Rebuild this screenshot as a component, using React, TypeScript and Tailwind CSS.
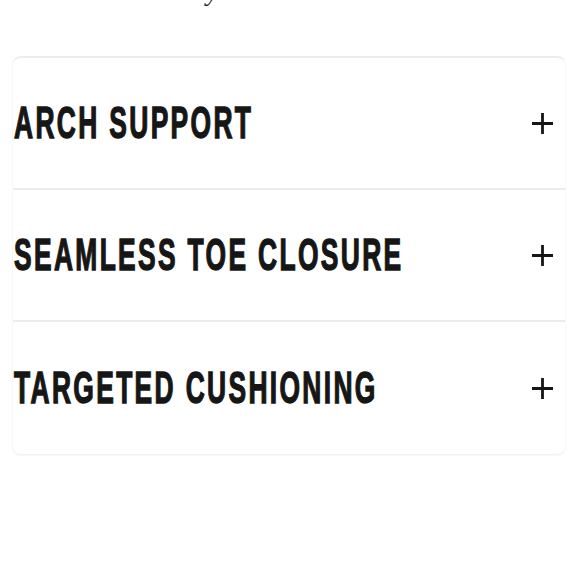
const features = ["ARCH SUPPORT", "SEAMLESS TOE CLOSURE", "TARGETED CUSHIONING"];

function PlusIcon() {
  return (
    <svg width="21" height="21" viewBox="0 0 21 21" className="shrink-0 text-[#161616]">
      <path d="M10.5 0v21M0 10.5h21" stroke="currentColor" strokeWidth="2.8" fill="none" />
    </svg>
  );
}

function FeatureRow({ title, last }: { title: string; last?: boolean }) {
  return (
    <button
      className={`flex h-[132px] w-full items-center justify-between pl-px pr-[12px] text-left ${
        last ? "" : "border-b-2 border-[#ececec]"
      }`}
    >
      <div className="min-w-0 flex-1 overflow-visible">
        <div
          className="origin-left whitespace-nowrap text-[44px] font-bold leading-none tracking-[3.9px] text-[#161616] [-webkit-text-stroke:1.4px_#161616] [transform:scaleX(0.6)]"
          style={{ fontFamily: '"Liberation Sans", Arial, sans-serif' }}
        >
          {title}
        </div>
      </div>
      <PlusIcon />
    </button>
  );
}

export default function App() {
  return (
    <div className="min-h-[580px] w-[580px] bg-white">
      <div className="h-[56px] overflow-hidden">
        <p
          className="-mt-[23px] pl-[22px] text-[27px] italic leading-[28px] text-[#222]"
          style={{ fontFamily: '"Liberation Serif", "Times New Roman", serif' }}
        >
          Cushioned all day
        </p>
      </div>
      <div className="ml-[13px] mr-[15px] rounded-lg border-t-2 border-[#ececec] shadow-[0_1px_3px_rgba(0,0,0,0.08)]">
        {features.map((f, i) => (
          <FeatureRow key={f} title={f} last={i === features.length - 1} />
        ))}
      </div>
    </div>
  );
}
